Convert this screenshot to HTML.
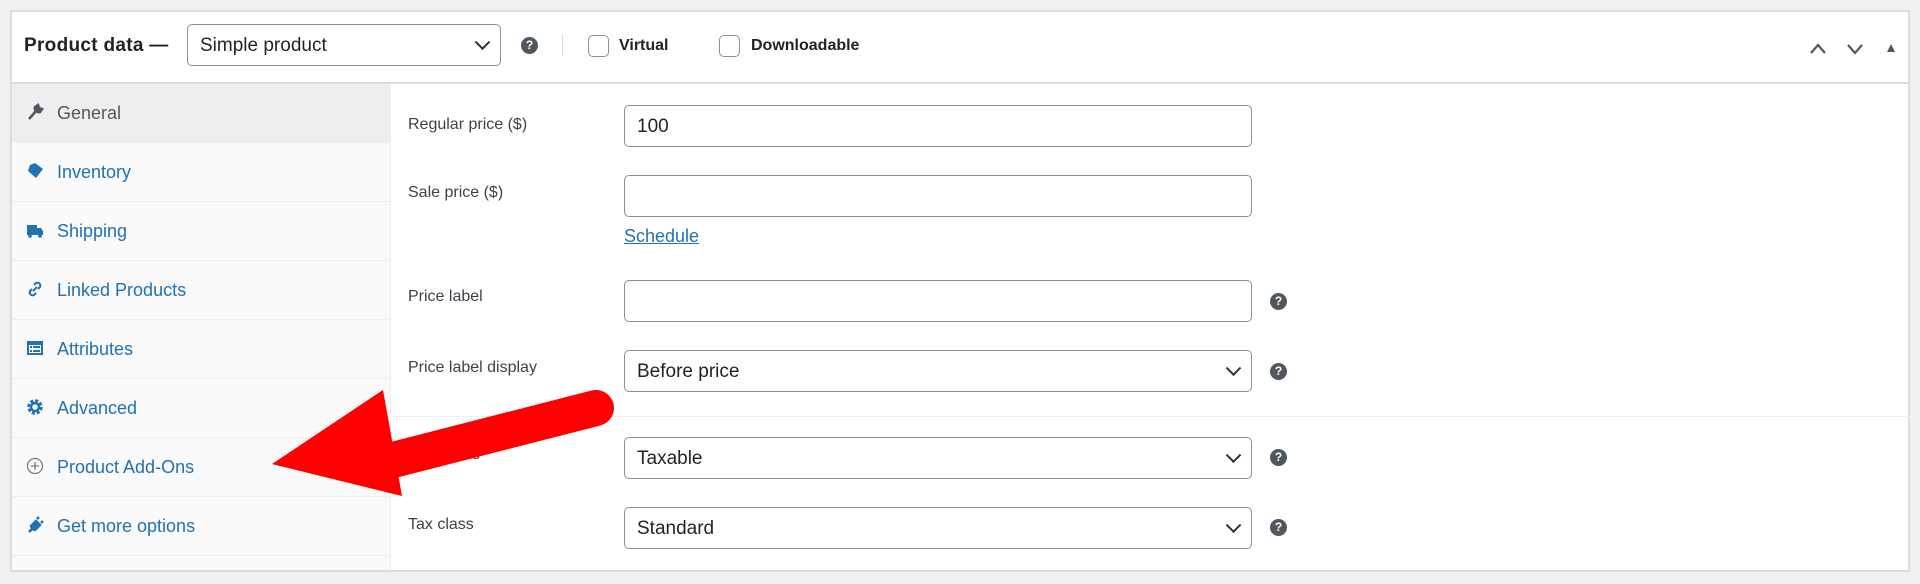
<!DOCTYPE html>
<html><head><style>
*{box-sizing:border-box;margin:0;padding:0}
body{width:1920px;height:584px;background:#f0f0f0;font-family:"Liberation Sans",sans-serif;position:relative;overflow:hidden}
.panel{position:absolute;left:10px;top:10px;width:1900px;height:562px;background:#fff;border:2px solid #dcdcde}
.hdr{position:absolute;left:0;top:0;right:0;height:72px;border-bottom:2px solid #dcdcde}
.abs{position:absolute}
.sel{position:absolute;border:1.5px solid #8c8f94;border-radius:5px;background:#fff;font-size:19px;color:#1d2327}
.sel span{position:absolute;left:12px;top:50%;transform:translateY(-45%)}
.chev{position:absolute;right:12px;top:50%;width:11px;height:11px;border-right:2px solid #2c3338;border-bottom:2px solid #2c3338;transform:translateY(-75%) rotate(45deg)}
.help{position:absolute;width:17px;height:17px;border-radius:50%;background:#50575e;color:#fff;font-size:12px;font-weight:bold;text-align:center;line-height:17px}
.side{position:absolute;left:0;top:72px;width:379px;bottom:0;background:#fafafa;border-right:1px solid #eee}
.row{position:absolute;left:0;width:379px;height:59px;border-bottom:1px solid #eee;color:#2271b1;font-size:18px}
.row .t{position:absolute;left:45px;top:19px}
.row .i{position:absolute;left:14px;top:19px;width:18px;height:18px}
.lab{position:absolute;left:396px;font-size:16px;color:#3c434a}
.inp{position:absolute;left:612px;width:628px;height:42px;border:1.5px solid #8c8f94;border-radius:5px;background:#fff;font-size:19px;color:#1d2327}
.inp span{position:absolute;left:12px;top:50%;transform:translateY(-45%)}
.cb{position:absolute;width:21px;height:22px;border:1.5px solid #8c8f94;border-radius:5px;background:#fff}
</style></head><body>
<div class="panel">
 <div class="hdr">
  <div class="abs" style="left:12px;top:23px;font-size:19px;font-weight:bold;color:#1d2327;letter-spacing:0.3px">Product data —</div>
  <div class="sel" style="left:175px;top:12px;width:314px;height:42px"><span>Simple product</span><div class="chev"></div></div>
  <div class="help" style="left:509px;top:25px">?</div>
  <div class="abs" style="left:550px;top:22px;width:1px;height:22px;background:#ddd"></div>
  <div class="cb" style="left:576px;top:23px"></div>
  <div class="abs" style="left:607px;top:25px;font-size:16px;font-weight:bold;color:#1d2327">Virtual</div>
  <div class="cb" style="left:707px;top:23px"></div>
  <div class="abs" style="left:739px;top:25px;font-size:16px;font-weight:bold;color:#1d2327">Downloadable</div>
  <svg class="abs" style="left:1796px;top:27px" width="100" height="20"><path d="M3 14 L10 6 L17 14" stroke="#50575e" stroke-width="2.2" fill="none"/><path d="M40 6 L47 14 L54 6" stroke="#50575e" stroke-width="2.2" fill="none"/><path d="M79 13 L83 5 L87 13Z" fill="#50575e"/></svg>
 </div>
 <div class="side">
  <div class="row" style="top:0;background:#eee;color:#50575e"><svg class="i" viewBox="0 0 18 18"><path d="M3 16 L10 8 M9 4 a4 4 0 0 0 5 5 L16 6 L13 5 L12 2 Z" stroke="#50575e" stroke-width="2.5" fill="#50575e"/></svg><span class="t">General</span></div>
  <div class="row" style="top:59px"><svg class="i" viewBox="0 0 18 18"><path d="M9 1 L17 7 L10 16 L2 9 L4 3 Z" fill="#2271b1"/></svg><span class="t">Inventory</span></div>
  <div class="row" style="top:118px"><svg class="i" viewBox="0 0 18 18"><path d="M1 4 H11 V14 H1Z M11 7 H15 L17 10 V14 H11Z" fill="#2271b1"/><circle cx="4" cy="15" r="1.8" fill="#2271b1"/><circle cx="14" cy="15" r="1.8" fill="#2271b1"/></svg><span class="t">Shipping</span></div>
  <div class="row" style="top:177px"><svg class="i" viewBox="0 0 18 18"><path d="M7 11 L11 7 M8 5 l2-2 a3 3 0 0 1 4 4 l-2 2 M10 13 l-2 2 a3 3 0 0 1 -4 -4 l2-2" stroke="#2271b1" stroke-width="2" fill="none"/></svg><span class="t">Linked Products</span></div>
  <div class="row" style="top:236px"><svg class="i" viewBox="0 0 18 18"><rect x="1" y="2" width="16" height="14" fill="#2271b1"/><rect x="3" y="6" width="12" height="8" fill="#fff"/><rect x="4" y="7" width="2" height="2" fill="#2271b1"/><rect x="7" y="7" width="7" height="2" fill="#2271b1"/><rect x="4" y="11" width="2" height="2" fill="#2271b1"/><rect x="7" y="11" width="7" height="2" fill="#2271b1"/></svg><span class="t">Attributes</span></div>
  <div class="row" style="top:295px"><svg class="i" viewBox="0 0 18 18"><circle cx="9" cy="9" r="6" fill="none" stroke="#2271b1" stroke-width="3.5" stroke-dasharray="3 1.7"/><circle cx="9" cy="9" r="4" fill="none" stroke="#2271b1" stroke-width="2.5"/></svg><span class="t">Advanced</span></div>
  <div class="row" style="top:354px"><svg class="i" viewBox="0 0 18 18"><circle cx="9" cy="9" r="7.5" fill="none" stroke="#787c82" stroke-width="1.3"/><path d="M9 5 V13 M5 9 H13" stroke="#787c82" stroke-width="1.3"/></svg><span class="t">Product Add-Ons</span></div>
  <div class="row" style="top:413px"><svg class="i" viewBox="0 0 18 18"><path d="M3 16 L6 13 L5 10 L10 5 L14 9 L9 14 L6 13 M11 3 L13 1 M15 7 L17 5" stroke="#2271b1" stroke-width="2.5" fill="#2271b1"/></svg><span class="t">Get more options</span></div>
 </div>
 <div class="lab" style="top:104px">Regular price ($)</div>
 <div class="inp" style="top:93px"><span>100</span></div>
 <div class="lab" style="top:172px">Sale price ($)</div>
 <div class="inp" style="top:163px"></div>
 <div class="abs" style="left:612px;top:214px;font-size:18px;color:#2271b1;text-decoration:underline">Schedule</div>
 <div class="lab" style="top:276px">Price label</div>
 <div class="inp" style="top:268px"></div>
 <div class="help" style="left:1258px;top:281px">?</div>
 <div class="lab" style="top:347px">Price label display</div>
 <div class="inp" style="top:338px"><span>Before price</span><div class="chev"></div></div>
 <div class="help" style="left:1258px;top:351px">?</div>
 <div class="abs" style="left:380px;top:404px;width:1518px;height:1px;background:#eee"></div>
 <div class="lab" style="top:434px">Tax status</div>
 <div class="inp" style="top:425px"><span>Taxable</span><div class="chev"></div></div>
 <div class="help" style="left:1258px;top:437px">?</div>
 <div class="lab" style="top:504px">Tax class</div>
 <div class="inp" style="top:495px"><span>Standard</span><div class="chev"></div></div>
 <div class="help" style="left:1258px;top:507px">?</div>
</div>
<svg class="abs" style="left:0;top:0" width="1920" height="584">
 <path d="M596 408 L385 462" stroke="#f00" stroke-width="36" stroke-linecap="round"/>
 <path d="M272 464 L383 390 L402 496 Z" fill="#f00"/>
</svg>
</body></html>
